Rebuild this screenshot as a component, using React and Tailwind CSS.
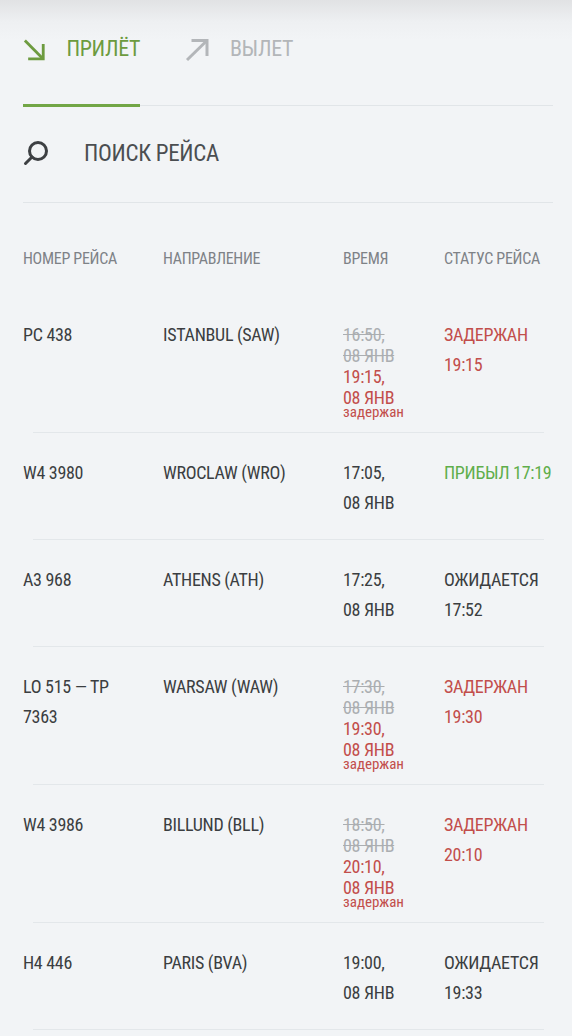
const flights = [
  {
    no: "PC 438",
    dest: "ISTANBUL (SAW)",
    delayed: true,
    old: ["16:50,", "08 ЯНВ"],
    time: ["19:15,", "08 ЯНВ"],
    status: ["ЗАДЕРЖАН", "19:15"],
    tone: "red",
  },
  {
    no: "W4 3980",
    dest: "WROCLAW (WRO)",
    time: ["17:05,", "08 ЯНВ"],
    status: ["ПРИБЫЛ 17:19"],
    tone: "green",
  },
  {
    no: "A3 968",
    dest: "ATHENS (ATH)",
    time: ["17:25,", "08 ЯНВ"],
    status: ["ОЖИДАЕТСЯ", "17:52"],
    tone: "dark",
  },
  {
    no: "LO 515 — TP 7363",
    dest: "WARSAW (WAW)",
    delayed: true,
    old: ["17:30,", "08 ЯНВ"],
    time: ["19:30,", "08 ЯНВ"],
    status: ["ЗАДЕРЖАН", "19:30"],
    tone: "red",
  },
  {
    no: "W4 3986",
    dest: "BILLUND (BLL)",
    delayed: true,
    old: ["18:50,", "08 ЯНВ"],
    time: ["20:10,", "08 ЯНВ"],
    status: ["ЗАДЕРЖАН", "20:10"],
    tone: "red",
  },
  {
    no: "H4 446",
    dest: "PARIS (BVA)",
    time: ["19:00,", "08 ЯНВ"],
    status: ["ОЖИДАЕТСЯ", "19:33"],
    tone: "dark",
  },
];

function ArrowIn() {
  return (
    <svg width="24" height="24" viewBox="0 0 24 24" fill="none" stroke="#6d9b3f" strokeWidth="3" strokeLinejoin="miter">
      <path d="M2 2 L21.5 21.5" />
      <path d="M5.5 21.5 H21.5 V5.5" />
    </svg>
  );
}

function ArrowOut() {
  return (
    <svg width="25" height="24" viewBox="0 0 25 24" fill="none" stroke="#b3b6b9" strokeWidth="3" strokeLinejoin="miter">
      <path d="M2 22 L22 2.5" />
      <path d="M6.5 2.5 H22 V18" />
    </svg>
  );
}

function SearchIcon() {
  return (
    <svg width="26" height="26" viewBox="0 0 26 26" fill="none" stroke="#3d4043" strokeWidth="3" strokeLinecap="round">
      <circle cx="15" cy="11" r="8.5" />
      <path d="M9 17 L2.5 23.5" />
    </svg>
  );
}

const toneClass = {
  red: "text-[#c24e4b]",
  green: "text-[#5fae4b]",
  dark: "text-[#3b3e41]",
};

function Row({ f }) {
  return (
    <div>
      <div className="grid grid-cols-[140px_180px_101px_1fr] pt-[25px] pb-[13px] text-[18px] leading-[30px] tracking-[-0.3px] text-[#3b3e41]">
        <div className="min-h-[68px] pr-[24px]">{f.no}</div>
        <div className="pr-2">{f.dest}</div>
        {f.delayed ? (
          <div className="pt-[4px] leading-[21px]">
            {f.old.map((t) => (
              <div key={t} className="text-[#abaeb1] line-through decoration-[#abaeb1]">{t}</div>
            ))}
            {f.time.map((t) => (
              <div key={t} className="text-[#c24e4b]">{t}</div>
            ))}
            <div className="-mt-[3px] text-[15px] leading-[14px] tracking-normal text-[#c24e4b]">задержан</div>
          </div>
        ) : (
          <div>
            {f.time.map((t) => (
              <div key={t}>{t}</div>
            ))}
          </div>
        )}
        <div className={toneClass[f.tone] + " whitespace-nowrap"}>
          {f.status.map((t) => (
            <div key={t}>{t}</div>
          ))}
        </div>
      </div>
      <div className="ml-[10px] mr-[9px] h-px bg-[#e3e7ea]" />
    </div>
  );
}

export default function App() {
  return (
    <div className="min-h-[1036px] bg-[#f2f4f6] bg-[linear-gradient(to_bottom,#e1e2e4_0px,#eef0f2_22px,#f2f4f6_40px)] pl-[23px] pr-[19px] pt-[38px] font-['Roboto_Condensed',Roboto,'Liberation_Sans',sans-serif] font-stretch-condensed">
      {/* tabs */}
      <div className="flex h-[24px] items-center">
        <div className="flex w-[117px] items-center gap-[21px]">
          <ArrowIn />
          <span className="-mt-[3px] text-[22px] leading-none tracking-[-0.4px] text-[#6d9b3f]">ПРИЛЁТ</span>
        </div>
        <div className="ml-[45px] flex items-center gap-[20px]">
          <ArrowOut />
          <span className="-mt-[3px] text-[22px] leading-none tracking-[-0.4px] text-[#b3b6b9]">ВЫЛЕТ</span>
        </div>
      </div>
      <div className="mt-[42px] flex h-[3px] items-center">
        <div className="h-[3px] w-[117px] bg-[#72a646]" />
        <div className="h-px flex-1 bg-[#e1e5e8]" />
      </div>

      {/* search */}
      <div className="mt-[33px] flex h-[26px] items-center gap-[35px]">
        <SearchIcon />
        <span className="text-[23px] leading-none tracking-[-0.3px] text-[#4b4e51]">ПОИСК РЕЙСА</span>
      </div>
      <div className="mt-[36px] h-px bg-[#e1e5e8]" />

      {/* header */}
      <div className="mt-[46px] grid grid-cols-[140px_180px_101px_1fr] text-[16px] leading-[20px] tracking-[-0.3px] text-[#7e8287]">
        <div>НОМЕР РЕЙСА</div>
        <div>НАПРАВЛЕНИЕ</div>
        <div>ВРЕМЯ</div>
        <div className="whitespace-nowrap">СТАТУС РЕЙСА</div>
      </div>

      <div className="mt-[26px]">
        {flights.map((f) => (
          <Row key={f.no} f={f} />
        ))}
      </div>
    </div>
  );
}
